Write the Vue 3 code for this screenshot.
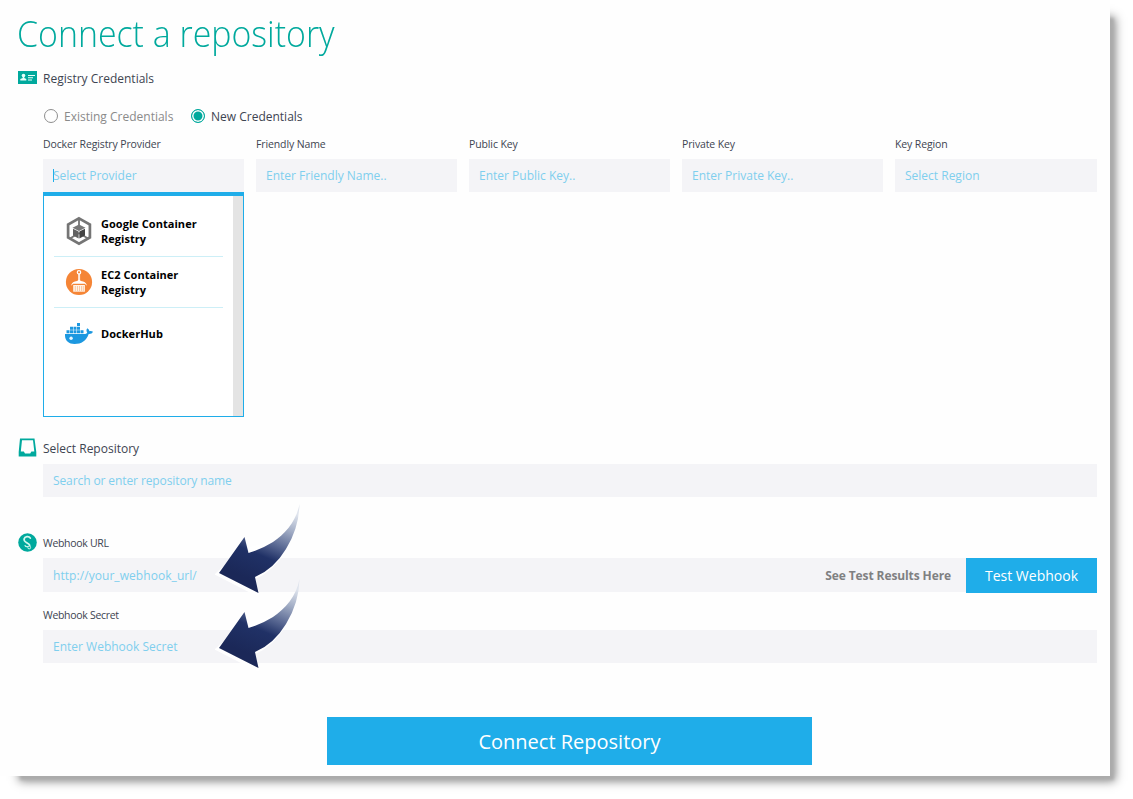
<script setup>
const fields = [
  { label: 'Docker Registry Provider', hint: 'Select Provider', open: true },
  { label: 'Friendly Name', hint: 'Enter Friendly Name..' },
  { label: 'Public Key', hint: 'Enter Public Key..' },
  { label: 'Private Key', hint: 'Enter Private Key..' },
  { label: 'Key Region', hint: 'Select Region' },
]
</script>

<template>
  <main class="card">
    <h1>Connect a repository</h1>

    <section class="heading reg">
      <svg class="icon" width="19" height="13" viewBox="0 0 19 13">
        <rect width="19" height="13" fill="#00a99d" />
        <g fill="#e6fffa">
          <circle cx="5.5" cy="4.6" r="1.8" />
          <path d="M4.7 5.5h1.6v1.6l2 .9v1.5H2.3V8l2.4-.9z" />
          <path d="M10 4h7v1h-7zM10 6.3h5v1h-5zM10 8.6h4v1h-4z" />
        </g>
      </svg>
      <span>Registry Credentials</span>
    </section>

    <div class="radios">
      <span class="radio"></span><span class="muted">Existing Credentials</span>
      <span class="radio on"></span><span>New Credentials</span>
    </div>

    <div class="fields">
      <div v-for="f in fields" :key="f.label" class="field">
        <div class="label">{{ f.label }}</div>
        <div class="input"><i v-if="f.open" class="caret"></i><span>{{ f.hint }}</span></div>
        <div v-if="f.open" class="menu">
          <div class="options">
            <div class="option">
              <svg width="28" height="30" viewBox="0 0 28 30">
                <path d="M14 2.300 24.900 8.600v12.800L14 27.700 3.100 21.400V8.600z" fill="none" stroke="#757575" stroke-width="2.7" />
                <path d="M14 3v7M14 17 5 22.500M14 17l9 5.500" stroke="#757575" stroke-width="1.8" />
                <path d="m14 8.500 6.500 3.300L14 15l-6.500-3.200z" fill="#777" />
                <path d="m8 12.700 5.600 2.800v7L8 19.500z" fill="#616161" />
                <path d="m20 12.700-5.600 2.800v7l5.600-3z" fill="#444" />
              </svg>
              <b>Google Container<br />Registry</b>
            </div>
            <div class="option">
              <svg width="28" height="28" viewBox="0 0 28 28">
                <circle cx="14" cy="14" r="13.100" fill="#f58536" />
                <circle cx="14" cy="4.300" r="1.700" fill="none" stroke="#fff" stroke-width="1.200" />
                <path d="M13.500 6h1.200v7h-1.200z" fill="#fff" stroke="#fff" stroke-width=".5" />
                <path d="M6 17.700c.7-3 3-4.400 6-4.600l2-1.400 2 1.400c3 .2 5.300 1.600 6 4.600l-2.200-2H8.200z" fill="#fff" />
                <path d="M8.200 17h11.700v6.700H8.200z" fill="#fff3e6" />
                <path d="M10.300 18v5M12.500 18v5M14.500 18v5M16.500 18v5M18.300 18v5" stroke="#f9b480" stroke-width=".65" />
              </svg>
              <b>EC2 Container<br />Registry</b>
            </div>
            <div class="option">
              <svg class="whale" width="28" height="24" viewBox="0 0 28 24">
                <g fill="#1c98e0">
                  <path d="M1.500 9.200h3v3h-3zM5 9.200h3v3H5zM8.500 9.200h3v3h-3zM12 9.200h3v3h-3zM15.500 9.200h3v3h-3zM5 5.700h3v3H5zM8.500 5.700h3v3h-3zM12 5.700h3v3h-3zM12 1.900h3v3.200h-3z" />
                  <path d="M0 13h19c1.700 0 2.700-.5 3.200-1.300-1-1.500-1-3.100.1-4.500 1.300.8 2 1.800 2.100 3 1.300-.3 2.600-.1 3.600.6-.8 1.700-2.200 2.300-4.300 2.200C21.200 19.800 16.500 23 9.500 23 3.300 23-.4 19.500 0 13z" />
                </g>
                <circle cx="6.100" cy="17.300" r="1.700" fill="#e7f7ff" />
              </svg>
              <b>DockerHub</b>
            </div>
          </div>
          <div class="track"></div>
        </div>
      </div>
    </div>

    <section class="heading repo">
      <svg class="icon" width="19" height="19" viewBox="0 0 19 19">
        <path fill="#00a99d" fill-rule="evenodd" d="M2 .5h14.500L18.300 14v4.500H.7V14zM4 2.300 2.800 13.400h3l1.200 2h5.200l1.200-2h2.900L15 2.300z" />
      </svg>
      <span>Select Repository</span>
    </section>
    <div class="input"><span class="s-repo">Search or enter repository name</span></div>

    <section class="heading hook">
      <svg class="icon" width="19" height="19" viewBox="0 0 19 19">
        <circle cx="9.500" cy="9.500" r="9.300" fill="#00a99d" />
        <path d="M12.300 5.200C11 2.800 6.700 3.200 6.100 6c-.4 2.500 1.500 3 3.500 4.200 2 1.100 2.500 2.200 1.800 3.400" fill="none" stroke="#d5f8ef" stroke-width="1.700" stroke-linecap="round" />
        <path d="M9.500 13.600c-.9.300-1.800 0-2.500-.9" fill="none" stroke="#d5f8ef" stroke-width="1.100" stroke-linecap="round" />
        <circle cx="11.200" cy="14.500" r="1.400" fill="#00a99d" stroke="#d5f8ef" />
      </svg>
      <span class="label tight">Webhook URL</span>
    </section>
    <div class="hookrow">
      <div class="input grow"><span class="s-url">http://your_webhook_url/</span><strong>See Test Results Here</strong></div>
      <button class="test">Test Webhook</button>
    </div>
    <div class="label tight secret">Webhook Secret</div>
    <div class="input"><span>Enter Webhook Secret</span></div>

    <button class="connect">Connect Repository</button>

    <svg v-for="n in 2" :key="n" class="arrow" :class="'a' + n" width="86" height="96" viewBox="0 0 86 96">
      <defs>
        <linearGradient :id="'g' + n" x1="66" y1="8" x2="36" y2="80" gradientUnits="userSpaceOnUse">
          <stop offset="0" stop-color="#dfe4ed" />
          <stop offset=".22" stop-color="#a3aec6" />
          <stop offset=".46" stop-color="#5b6a94" />
          <stop offset=".66" stop-color="#203166" />
          <stop offset="1" stop-color="#1b2858" />
        </linearGradient>
      </defs>
      <path d="M4 73 43 93 39 77Q58 69 70 49L60 42 29 50z" fill="#fff" stroke="#fff" stroke-width="4" transform="translate(-1 1)" />
      <path d="M84.500 4C81.500 21 70 34 58 42Q45 50 33.500 53L29.500 37 4 73 43.500 93 40 77Q59 69 71 49 84 28 84.500 4z" :fill="'url(#g' + n + ')'" />
    </svg>
  </main>
</template>

<style>
body { min-height: 799px; background: #fff; }
</style>

<style scoped>
.card {
  position: relative;
  box-sizing: border-box;
  width: 1110px;
  height: 776px;
  padding: 8px 13px 0 43px;
  background: #fefefe;
  font-family: "Open Sans", "Noto Sans", sans-serif;
  font-size: 12px;
  color: #3d4451;
  display: flex;
  flex-direction: column;
  white-space: nowrap;
}
.card::before {
  content: "";
  position: absolute;
  z-index: -1;
  inset: 18px -4px -4px 20px;
  box-shadow: 0 0 9px 1px rgba(0, 0, 0, .5);
  background: rgba(0, 0, 0, .33);
  filter: blur(1.5px);
}
h1 {
  margin: 0 0 0 -26px;
  height: 52px;
  line-height: 52px;
  font-size: 36px;
  font-weight: 300;
  transform: scaleX(.941);
  transform-origin: left;
  color: #00a99d;
}
.heading { display: flex; align-items: center; margin-left: -25px; gap: 6px; }
.icon { flex: none; margin-bottom: 1px; }
.reg { margin-top: 8px; height: 20px; }
.radios { display: flex; align-items: center; height: 20px; margin-top: 18px; }
.radio { box-sizing: border-box; width: 14px; height: 14px; margin: 0 6px 0 1px; border: 1px solid #8e8e8e; border-radius: 50%; }
.radio.on { margin-left: 17px; border-color: #00a99d; background: #00a99d; box-shadow: inset 0 0 0 1.5px #fff; }
.muted { color: #8a8a8a; width: 110px; }
.fields { display: grid; grid-template-columns: repeat(4, 201px) 202px; gap: 12px; margin-top: 10px; height: 56px; }
.label { font-size: 10.500px; line-height: 16px; letter-spacing: -.12px; }
.label.tight { letter-spacing: -.3px; }
.fields .label { margin-bottom: 7px; }
.input { box-sizing: border-box; height: 33px; padding: 0 10px; background: #f4f4f7; display: flex; align-items: center; color: #7fcfee; }
.s-repo { letter-spacing: -.1px; }
.s-url { letter-spacing: .06px; }
.caret { width: 1px; height: 13px; margin-right: -1px; background: #1fade9; }
.menu { position: relative; z-index: 1; box-sizing: border-box; height: 225px; border: 1px solid #1fade9; border-top-width: 4px; background: #fff; display: flex; }
.options { flex: 1; padding: 10px; }
.option { box-sizing: border-box; height: 51px; padding-left: 11px; display: flex; align-items: center; gap: 8px; border-bottom: 1px solid #cdeff7; color: #000; font-size: 11px; line-height: 15px; letter-spacing: .04px; }
.option svg { flex: none; }
.option .whale { margin-bottom: 2px; }
.option:last-child { border: 0; }
.track { width: 10px; background: #e4e4e4; }
.repo { height: 20px; margin-top: 246px; }
.repo + .input { margin-top: 6px; }
.hook { height: 20px; margin-top: 36px; }
.hookrow { display: flex; height: 35px; margin-top: 5px; }
.grow { flex: 1; height: 34px; justify-content: space-between; padding-right: 15px; }
.grow strong { color: #7f8082; letter-spacing: -.1px; }
button { border: 0; padding: 0; background: #1fade9; color: #fff; font-family: inherit; }
.test { width: 131px; font-size: 14px; }
.secret { margin: 14px 0 7px; }
.connect { width: 485px; height: 48px; margin: 54px 0 0 284px; font-size: 20px; }
.arrow { position: absolute; left: 215px; z-index: 2; }
.a1 { top: 500px; }
.a2 { top: 575px; }
</style>
